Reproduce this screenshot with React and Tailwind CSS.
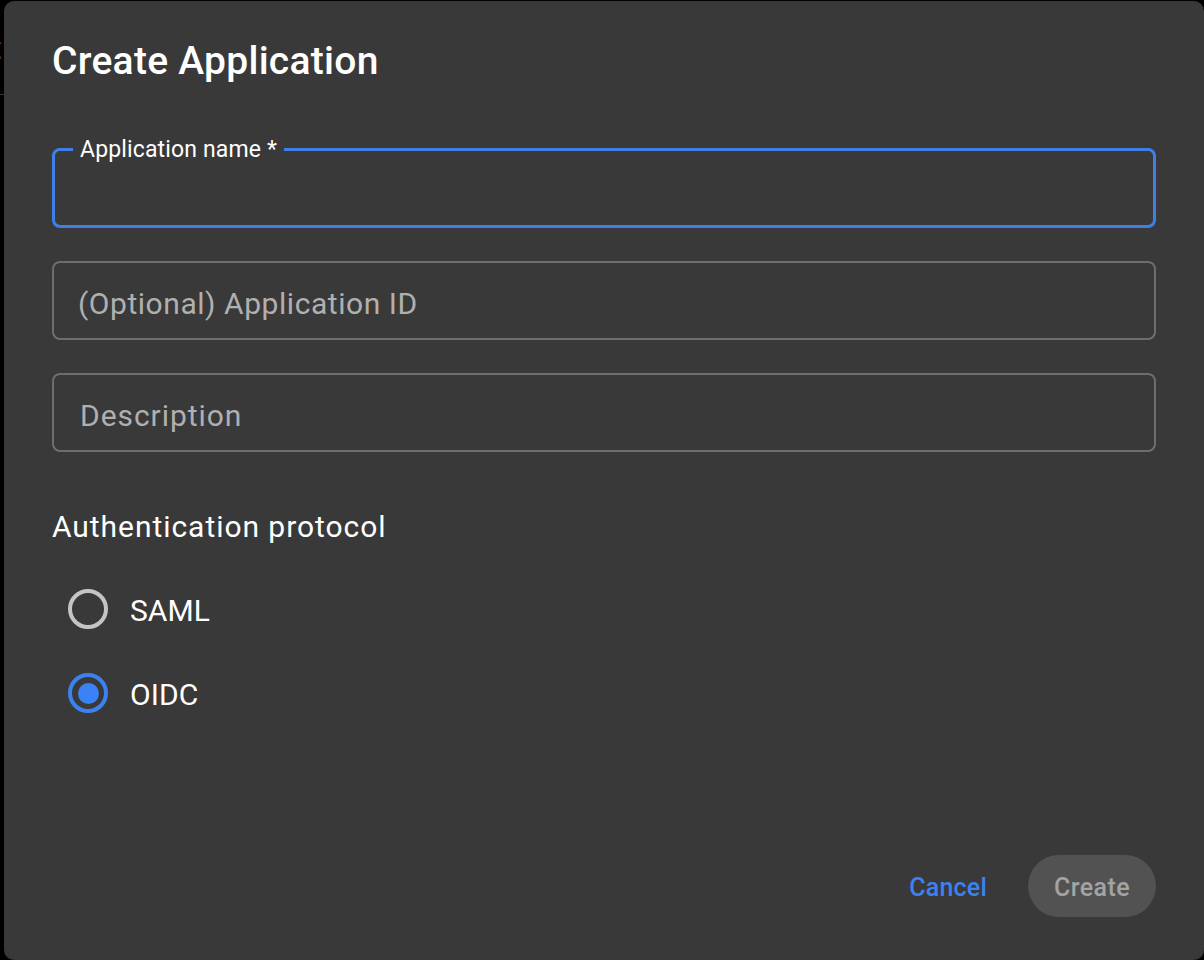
const font = { fontFamily: '"Roboto", "Liberation Sans", sans-serif' };

function OutlinedField({ label, labelClass = "" }) {
  return (
    <div className="h-[79px] rounded-[8px] border-2 border-[#6e6e6e] flex items-center pl-[24px] pt-[6px]">
      <span className={`text-[30px] leading-none text-[#b0b0b0] ${labelClass}`}>{label}</span>
    </div>
  );
}

function Radio({ label, checked }) {
  return (
    <div className="h-[84px] flex items-center pl-[16px]">
      <span className={`w-[40px] h-[40px] rounded-full border-[4px] flex items-center justify-center ${checked ? "border-[#3b82f0]" : "border-[#c4c4c4]"}`}>
        {checked && <span className="w-[21px] h-[21px] rounded-full bg-[#3b82f6]" />}
      </span>
      <span className="ml-[22px] pt-[3px] text-[30px] leading-none tracking-[0.05px] text-white">{label}</span>
    </div>
  );
}

export default function App() {
  return (
    <div style={font} className="w-[1204px] h-[960px] bg-black flex overflow-hidden">
      <div className="w-[4px] shrink-0 overflow-hidden">
        <div className="h-[95px] border-b border-[#333333] pt-[30px] text-[32px] leading-9 text-[#8a8a8a] -ml-[9px]">
          <span className="whitespace-nowrap">t</span>
        </div>
      </div>
      <div className="flex-1 mt-[1px] h-[959px] rounded-[10px] bg-[#393939] pt-[36px] pl-[48px] pr-[48px] flex flex-col">
        <h1 className="text-[39px] leading-[48px] font-medium tracking-[0.27px] text-white">Create Application</h1>

        <div className="mt-[63px] relative h-[80px] rounded-[8px] border-[3px] border-[#3f7fe8]">
          <span className="absolute -top-[13px] left-[18px] px-[7px] bg-[#393939] text-[23px] leading-[24px] tracking-[0.15px] text-white whitespace-nowrap">
            Application name *
          </span>
        </div>

        <div className="mt-[33px] flex flex-col gap-[33px]">
          <OutlinedField label="(Optional) Application ID" labelClass="tracking-[0.55px]" />
          <OutlinedField label="Description" labelClass="ml-[2px] tracking-[0.95px]" />
        </div>

        <p className="mt-[57px] text-[30px] leading-[36px] tracking-[0.95px] text-white">Authentication protocol</p>

        <div className="mt-[22px] flex flex-col">
          <Radio label="SAML" />
          <Radio label="OIDC" checked />
        </div>

        <div className="mt-[120px] flex items-center justify-end">
          <span className="pt-[4px] text-[25px] font-medium tracking-[0.2px] text-[#3b82f0]">Cancel</span>
          <span className="ml-[41px] pt-[4px] w-[128px] h-[62px] rounded-full bg-[#525252] flex items-center justify-center text-[25px] font-medium tracking-[0.4px] text-[#a3a3a3]">
            Create
          </span>
        </div>
      </div>
    </div>
  );
}
